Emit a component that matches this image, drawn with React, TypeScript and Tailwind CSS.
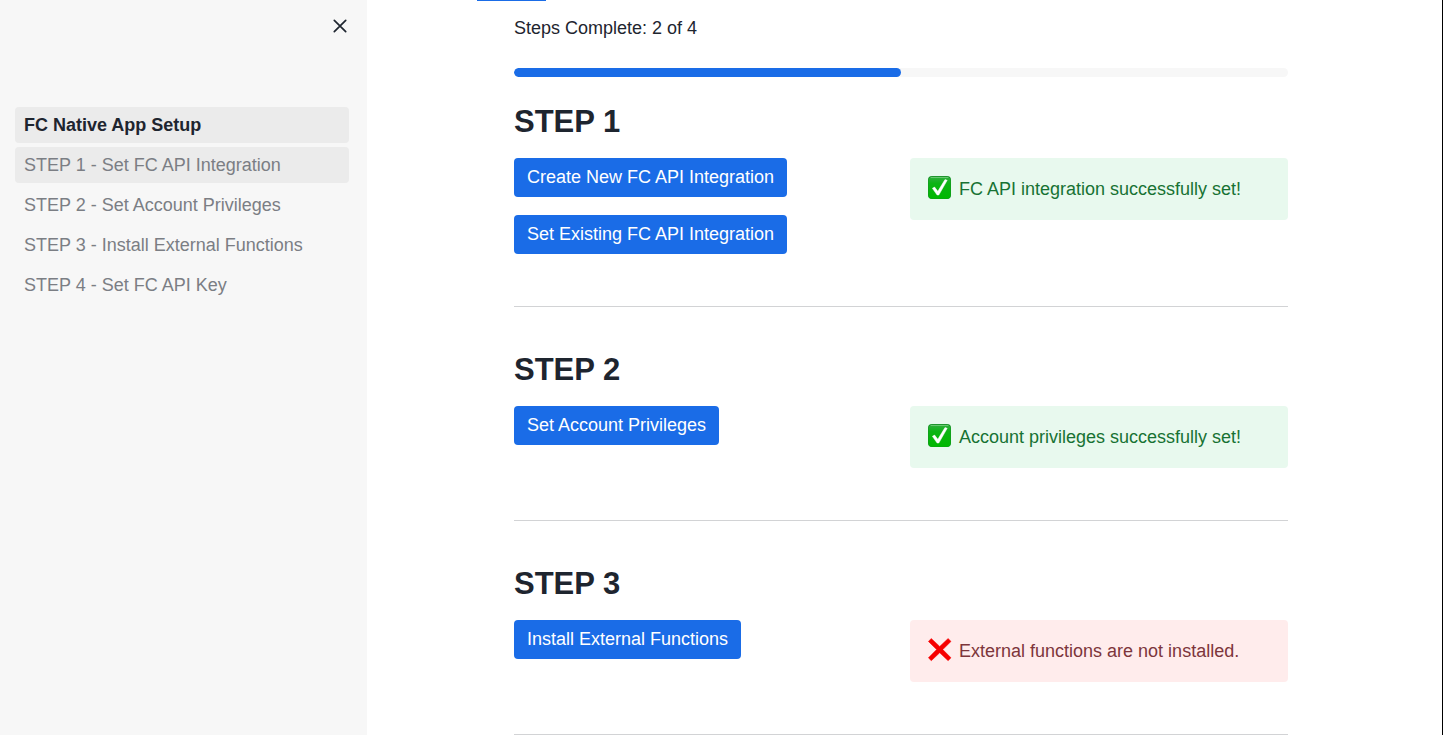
interface Step {
  title: string;
  actions: string[];
  done: boolean;
  message: string;
}

const steps: Step[] = [
  {
    title: "STEP 1",
    actions: ["Create New FC API Integration", "Set Existing FC API Integration"],
    done: true,
    message: "FC API integration successfully set!",
  },
  {
    title: "STEP 2",
    actions: ["Set Account Privileges"],
    done: true,
    message: "Account privileges successfully set!",
  },
  {
    title: "STEP 3",
    actions: ["Install External Functions"],
    done: false,
    message: "External functions are not installed.",
  },
];

const pages = [
  { label: "FC Native App Setup", className: "bg-[#ebebeb] font-bold text-[#1e252f]" },
  { label: "STEP 1 - Set FC API Integration", className: "bg-[#ebebeb] text-[#7b7e84]" },
  { label: "STEP 2 - Set Account Privileges", className: "text-[#7b7e84] hover:bg-[#ebebeb]" },
  { label: "STEP 3 - Install External Functions", className: "text-[#7b7e84] hover:bg-[#ebebeb]" },
  { label: "STEP 4 - Set FC API Key", className: "text-[#7b7e84] hover:bg-[#ebebeb]" },
];

function CloseIcon() {
  return (
    <svg viewBox="0 0 16 16" className="size-4" fill="none" stroke="#1e252f" strokeWidth="1.7" strokeLinecap="round" aria-hidden="true">
      <path d="M2.3 2.3 13.7 13.7M13.7 2.3 2.3 13.7" />
    </svg>
  );
}

function CheckMark() {
  return (
    <svg viewBox="0 0 24 26" className="h-[26px] w-6 shrink-0" aria-hidden="true">
      <defs>
        <linearGradient id="check-fill" x1="0" y1="0" x2="0" y2="1">
          <stop offset="0" stopColor="#2fae3c" />
          <stop offset="0.3" stopColor="#0cb414" />
          <stop offset="1" stopColor="#00b800" />
        </linearGradient>
      </defs>
      <rect x="0" y="0" width="23" height="23" rx="4" fill="#168f26" />
      <rect x="0.5" y="1.1" width="22" height="21.6" rx="3.6" fill="url(#check-fill)" />
      <path d="M3 1.4h17" stroke="#7fd388" strokeWidth="0.8" strokeLinecap="round" />
      <path d="M4.4 12.3 6.6 11.1 9.8 15.3 17 3.6 19.2 4.3 10.8 19 9.1 19Z" fill="#fff" stroke="#fff" strokeWidth="0.5" strokeLinejoin="round" />
    </svg>
  );
}

function CrossMark() {
  return (
    <svg viewBox="0 0 24 26" className="h-[26px] w-6 shrink-0" aria-hidden="true">
      <path
        d="M3.3 0.5 11.7 8.4 20.1 0.5 23 3.4 14.8 11.6 23 19.8 20.1 22.7 11.7 14.8 3.3 22.7 0.4 19.8 8.6 11.6 0.4 3.4Z"
        fill="#f60000"
        stroke="#f60000"
        strokeWidth="0.5"
        strokeLinejoin="round"
      />
    </svg>
  );
}

function StepSection({ step }: { step: Step }) {
  return (
    <section className="border-b border-[#d2d3d5] pb-[52px]">
      <h2 className="mb-[13px] text-[31px] leading-[46px] font-bold">{step.title}</h2>
      <div className="grid grid-cols-2 gap-[18px]">
        <div className="flex flex-col items-start gap-[18px]">
          {step.actions.map((action) => (
            <button
              key={action}
              type="button"
              className="rounded bg-[#1a6ce7] px-[13px] py-1.5 leading-[27px] text-white hover:bg-[#155bc4]"
            >
              {action}
            </button>
          ))}
        </div>
        <div
          role="status"
          className={
            step.done
              ? "flex items-center gap-[7px] self-start rounded bg-[#e8f9ee] p-[18px] leading-[26px] text-[#177233]"
              : "flex items-center gap-[7px] self-start rounded bg-[#ffecec] p-[18px] leading-[26px] text-[#7d353b]"
          }
        >
          {step.done ? <CheckMark /> : <CrossMark />}
          <p>{step.message}</p>
        </div>
      </div>
    </section>
  );
}

export default function App() {
  const completed = steps.filter((step) => step.done).length;
  const total = 4;

  return (
    <div className="flex min-h-screen bg-white font-['Liberation_Sans',Arial,sans-serif] text-[18px] text-[#1e252f]">
      <aside className="w-[367px] shrink-0 bg-[#f7f7f7] pr-[18px] pl-[15px]">
        <div className="flex justify-end pt-[18px]">
          <button type="button" aria-label="Close sidebar" className="mr-px">
            <CloseIcon />
          </button>
        </div>
        <nav className="flex flex-col gap-1 pt-[73px]" aria-label="Pages">
          {pages.map((page) => (
            <a key={page.label} href="#" className={`rounded px-[9px] py-[5px] leading-[26px] ${page.className}`}>
              {page.label}
            </a>
          ))}
        </nav>
      </aside>

      <main className="min-w-0 grow border-r border-black pr-[7px]">
        <div className="mx-auto max-w-[848px] px-[37px]">
          <div className="-ml-[37px] h-px w-[69px] bg-[#1a6ce7]" />
          <p id="progress-label" className="pt-3.5 leading-[26px]">
            Steps Complete: {completed} of {total}
          </p>
          <div
            role="progressbar"
            aria-labelledby="progress-label"
            aria-valuemin={0}
            aria-valuemax={total}
            aria-valuenow={completed}
            className="mt-[27px] h-[9px] overflow-hidden rounded-full bg-[#f7f7f7]"
          >
            <div className="h-full rounded-full bg-[#1a6ce7]" style={{ width: `${(completed / total) * 100}%` }} />
          </div>
          <div className="flex flex-col gap-10 pt-[22px]">
            {steps.map((step) => (
              <StepSection key={step.title} step={step} />
            ))}
          </div>
        </div>
      </main>
    </div>
  );
}
